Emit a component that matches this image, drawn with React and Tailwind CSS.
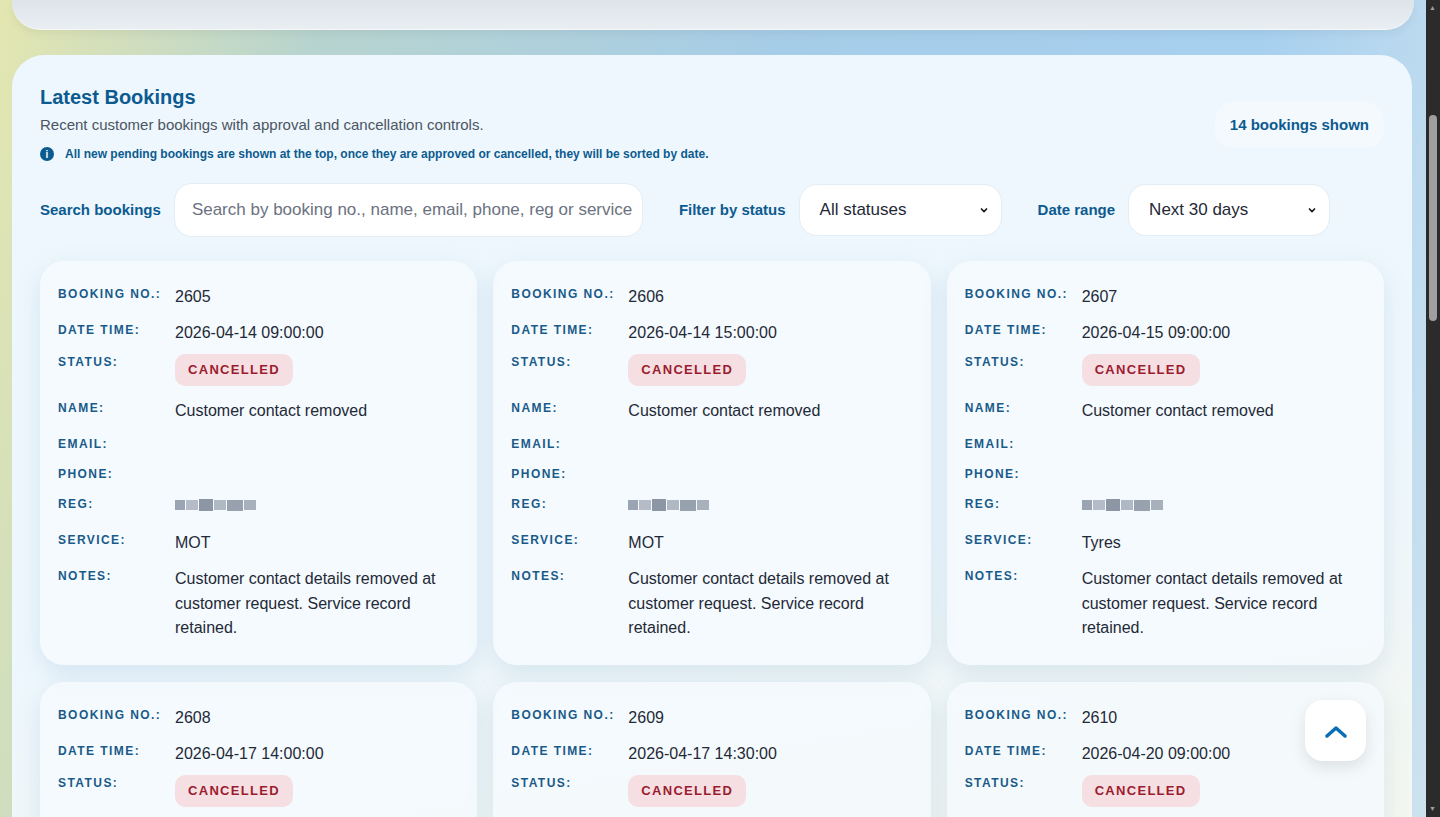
import React from "react";

const bookings = [
  { no: "2605", dt: "2026-04-14 09:00:00", service: "MOT" },
  { no: "2606", dt: "2026-04-14 15:00:00", service: "MOT" },
  { no: "2607", dt: "2026-04-15 09:00:00", service: "Tyres" },
  { no: "2608", dt: "2026-04-17 14:00:00", service: "MOT" },
  { no: "2609", dt: "2026-04-17 14:30:00", service: "MOT" },
  { no: "2610", dt: "2026-04-20 09:00:00", service: "MOT" },
];

function Label({ children }) {
  return <div className="w-[117px] shrink-0 text-[12px] leading-[16px] font-bold tracking-[0.12em] text-[#1a5a8a]">{children}</div>;
}

function Row({ label, children, h }) {
  return (
    <div className={`flex ${h}`}>
      <Label>{label}</Label>
      <div className="text-[16px] leading-[24px] text-[#1f2937] flex-1 -mt-[1px]">{children}</div>
    </div>
  );
}

function Card({ b }) {
  return (
    <div className="rounded-[24px] bg-[#f4f9fd]/90 shadow-[0_8px_24px_rgba(100,150,190,0.18)] pl-[18px] pr-5 pt-[25px] pb-[22px] h-[404px]">
      <Row label="BOOKING NO.:" h="h-[36px]">{b.no}</Row>
      <Row label="DATE TIME:" h="h-[32px]">{b.dt}</Row>
      <div className="flex h-[46px]">
        <Label>STATUS:</Label>
        <div>
          <span className="inline-flex items-center h-[32px] px-[13px] rounded-[10px] bg-[#f6dfe3] text-[#9b1c2e] text-[13px] font-bold tracking-[0.1em]">CANCELLED</span>
        </div>
      </div>
      <Row label="NAME:" h="h-[36px]">Customer contact removed</Row>
      <Row label="EMAIL:" h="h-[30px]"></Row>
      <Row label="PHONE:" h="h-[30px]"></Row>
      <div className="flex h-[36px]">
        <Label>REG:</Label>
        <div className="flex items-center gap-[1px] h-[14px] mt-[2px] blur-[0.6px]">
          <div className="w-[10px] h-[10px] bg-[#9aa4b2]" />
          <div className="w-[12px] h-[10px] bg-[#b5bcc7]" />
          <div className="w-[14px] h-[12px] bg-[#8c96a4]" />
          <div className="w-[12px] h-[10px] bg-[#b0b8c3]" />
          <div className="w-[16px] h-[11px] bg-[#98a1ae]" />
          <div className="w-[12px] h-[10px] bg-[#a8b0bb]" />
        </div>
      </div>
      <Row label="SERVICE:" h="h-[36px]">{b.service}</Row>
      <Row label="NOTES:">
        <div className="leading-[24.5px]">Customer contact details removed at customer request. Service record retained.</div>
      </Row>
    </div>
  );
}

function Chevron() {
  return (
    <svg width="10" height="10" viewBox="0 0 10 10" className="absolute right-[12px] top-1/2 -translate-y-1/2">
      <path d="M2 3.5 L5 6.5 L8 3.5" fill="none" stroke="#111" strokeWidth="1.6" />
    </svg>
  );
}

export default function App() {
  return (
    <div className="w-[1440px] h-[817px] overflow-hidden flex font-[family-name:Liberation_Sans,Arial,sans-serif] bg-[linear-gradient(100deg,#e3e6b0_0%,#b8d4cf_20%,#a6cde8_50%,#a7d0ef_80%,#cfe3ef_100%)]">
      <div className="flex-1 relative">
        <div className="mx-[12px] h-[30px] rounded-b-[28px] bg-[linear-gradient(180deg,#dde4ea,#e9eef2)] border-b border-white/70 shadow-[0_4px_10px_rgba(0,0,0,0.05)]" />
        <div className="ml-[12px] mr-[14px] mt-[25px] rounded-[32px] bg-[linear-gradient(170deg,#eef7fd_0%,#eef7fd_60%,#f5f7ef_100%)] pl-[28px] pr-[28px] pt-[30px] h-[800px]">
          <div className="flex justify-between">
            <div>
              <h2 className="text-[20px] font-bold text-[#0c5b90] leading-[24px]">Latest Bookings</h2>
              <p className="mt-[6px] text-[15px] leading-[20px] text-[#4b5563]">Recent customer bookings with approval and cancellation controls.</p>
              <div className="mt-[10px] flex items-center gap-[11px] text-[12px] font-bold text-[#0c5b90]">
                <span className="w-[14px] h-[14px] rounded-full bg-[#0c5b90] text-white text-[10px] font-bold flex items-center justify-center">i</span>
                All new pending bookings are shown at the top, once they are approved or cancelled, they will be sorted by date.
              </div>
            </div>
            <div className="mt-[17px] h-[46px] px-[15px] rounded-[18px] bg-[#f3f9fd] flex items-center text-[15px] font-bold text-[#0c5b90]">14 bookings shown</div>
          </div>
          <div className="mt-[20px] flex items-center">
            <span className="text-[15px] font-bold text-[#0c5b90]">Search bookings</span>
            <div className="ml-[13px] w-[469px] h-[54px] rounded-[18px] bg-white border border-[#e2edf5] flex items-center px-[17px] text-[17px] text-[#6b7280] whitespace-nowrap overflow-hidden">Search by booking no., name, email, phone, reg or service</div>
            <span className="ml-[36px] text-[15px] font-bold text-[#0c5b90]">Filter by status</span>
            <div className="ml-[13px] relative w-[203px] h-[52px] rounded-[18px] bg-white border border-[#e2edf5] flex items-center px-[20px] text-[17px] text-[#1f2937]">All statuses<Chevron /></div>
            <span className="ml-[36px] text-[15px] font-bold text-[#0c5b90]">Date range</span>
            <div className="ml-[13px] relative w-[202px] h-[52px] rounded-[18px] bg-white border border-[#e2edf5] flex items-center px-[20px] text-[17px] text-[#1f2937]">Next 30 days<Chevron /></div>
          </div>
          <div className="mt-[24px] grid grid-cols-3 gap-x-[16px] gap-y-[17px]">
            {bookings.map((b) => <Card key={b.no} b={b} />)}
          </div>
        </div>
        <div className="absolute left-[1305px] top-[700px] w-[61px] h-[61px] rounded-[18px] bg-white shadow-[0_6px_16px_rgba(0,0,0,0.1)] flex items-center justify-center">
          <svg width="24" height="14" viewBox="0 0 24 14"><path d="M3 12 L12 4 L21 12" fill="none" stroke="#0c6fb5" strokeWidth="3.5" strokeLinecap="round" strokeLinejoin="round" /></svg>
        </div>
      </div>
      <div className="w-[14px] bg-[#2b2b2b] relative">
        <div className="absolute left-[3px] top-[115px] w-[8px] h-[206px] rounded-full bg-[#9f9f9f]" />
        <div className="absolute left-[3px] top-[3px] text-[#9f9f9f] text-[7px]">▲</div>
        <div className="absolute left-[3px] bottom-[3px] text-[#9f9f9f] text-[7px]">▼</div>
      </div>
    </div>
  );
}
